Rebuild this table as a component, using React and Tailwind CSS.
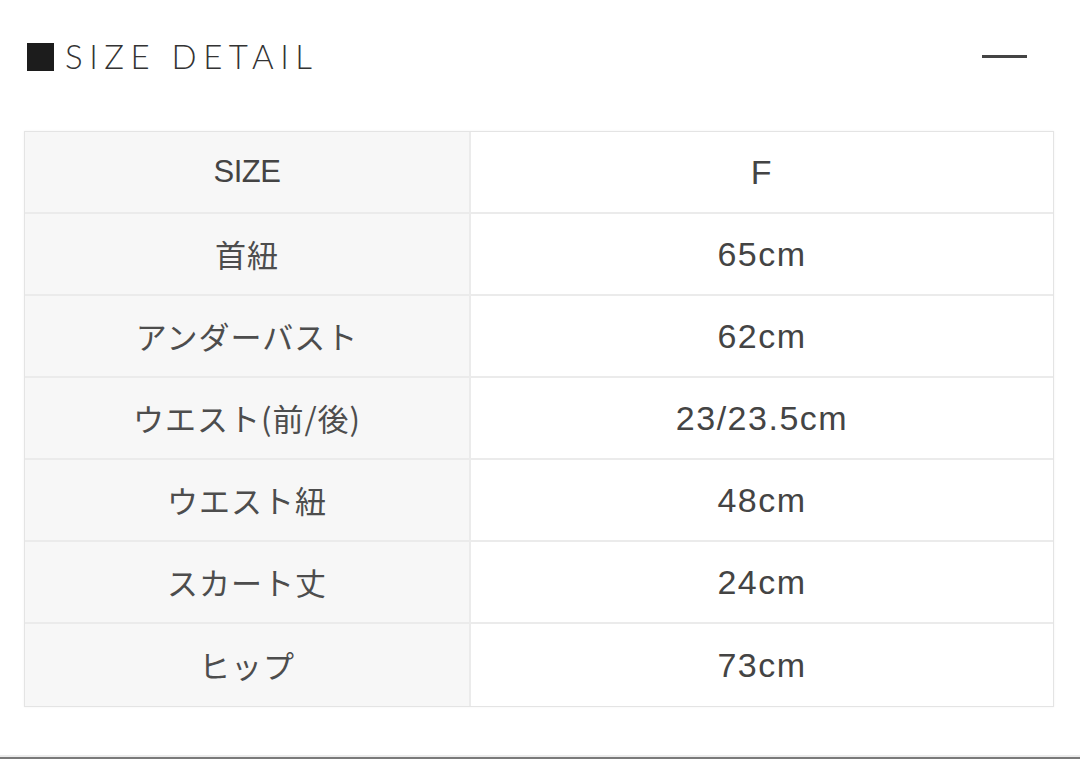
const rows = [
  ['SIZE', 'F', true],
  ['首紐', '65cm'],
  ['アンダーバスト', '62cm'],
  ['ウエスト(前/後)', '23/23.5cm'],
  ['ウエスト紐', '48cm'],
  ['スカート丈', '24cm'],
  ['ヒップ', '73cm'],
];

const jp = { fontFamily: '"Noto Sans CJK JP", "Liberation Sans", sans-serif' };
const latin = { fontFamily: '"Liberation Sans", "Noto Sans CJK JP", sans-serif' };

function Label({ text, head }) {
  // latin header uses the arial-ish face, japanese labels use CJK
  if (head) {
    return (
      <span className="text-[31px] tracking-[-0.5px] text-[#444]" style={latin}>
        {text}
      </span>
    );
  }
  return (
    <span className="text-[31px] text-[#4d4d4d] tracking-[1px]" style={jp}>
      {text}
    </span>
  );
}

export default function App() {
  return (
    <div className="w-[1080px] h-[759px] bg-white flex flex-col overflow-hidden">
      <div className="flex items-center justify-between pl-[27px] pr-[53px] pt-[40px]">
        <div className="flex items-center gap-[11px]">
          <div className="w-[27px] h-[28px] bg-[#1c1c1c]" />
          <h2
            className="text-[33px] font-light leading-none tracking-[6.5px] text-[#333]"
            style={{ fontFamily: 'Lato, "Liberation Sans", sans-serif' }}
          >
            SIZE DETAIL
          </h2>
        </div>
        <div className="w-[45px] h-[3px] bg-[#444]" />
      </div>

      <div className="ml-[24px] mt-[58px] w-[1030px] border border-[#e4e4e4] shadow-[0_0_2px_rgba(0,0,0,0.06)]">
        {rows.map(([label, value, head], i) => (
          <div
            key={label}
            className={
              'grid grid-cols-[446px_1fr] h-[82px] ' +
              (i < rows.length - 1 ? 'border-b-2 border-[#ebebeb]' : '')
            }
          >
            <div className="bg-[#f7f7f7] border-r-2 border-[#ebebeb] flex items-center justify-center">
              <Label text={label} head={head} />
            </div>
            <div className="bg-white flex items-center justify-center">
              <span className="text-[34px] tracking-[1.5px] text-[#444]" style={latin}>
                {value}
              </span>
            </div>
          </div>
        ))}
      </div>

      <div className="mt-auto h-[2px] bg-[#ececec]" />
      <div className="h-[2px] bg-[#7a7a7a]" />
    </div>
  );
}
